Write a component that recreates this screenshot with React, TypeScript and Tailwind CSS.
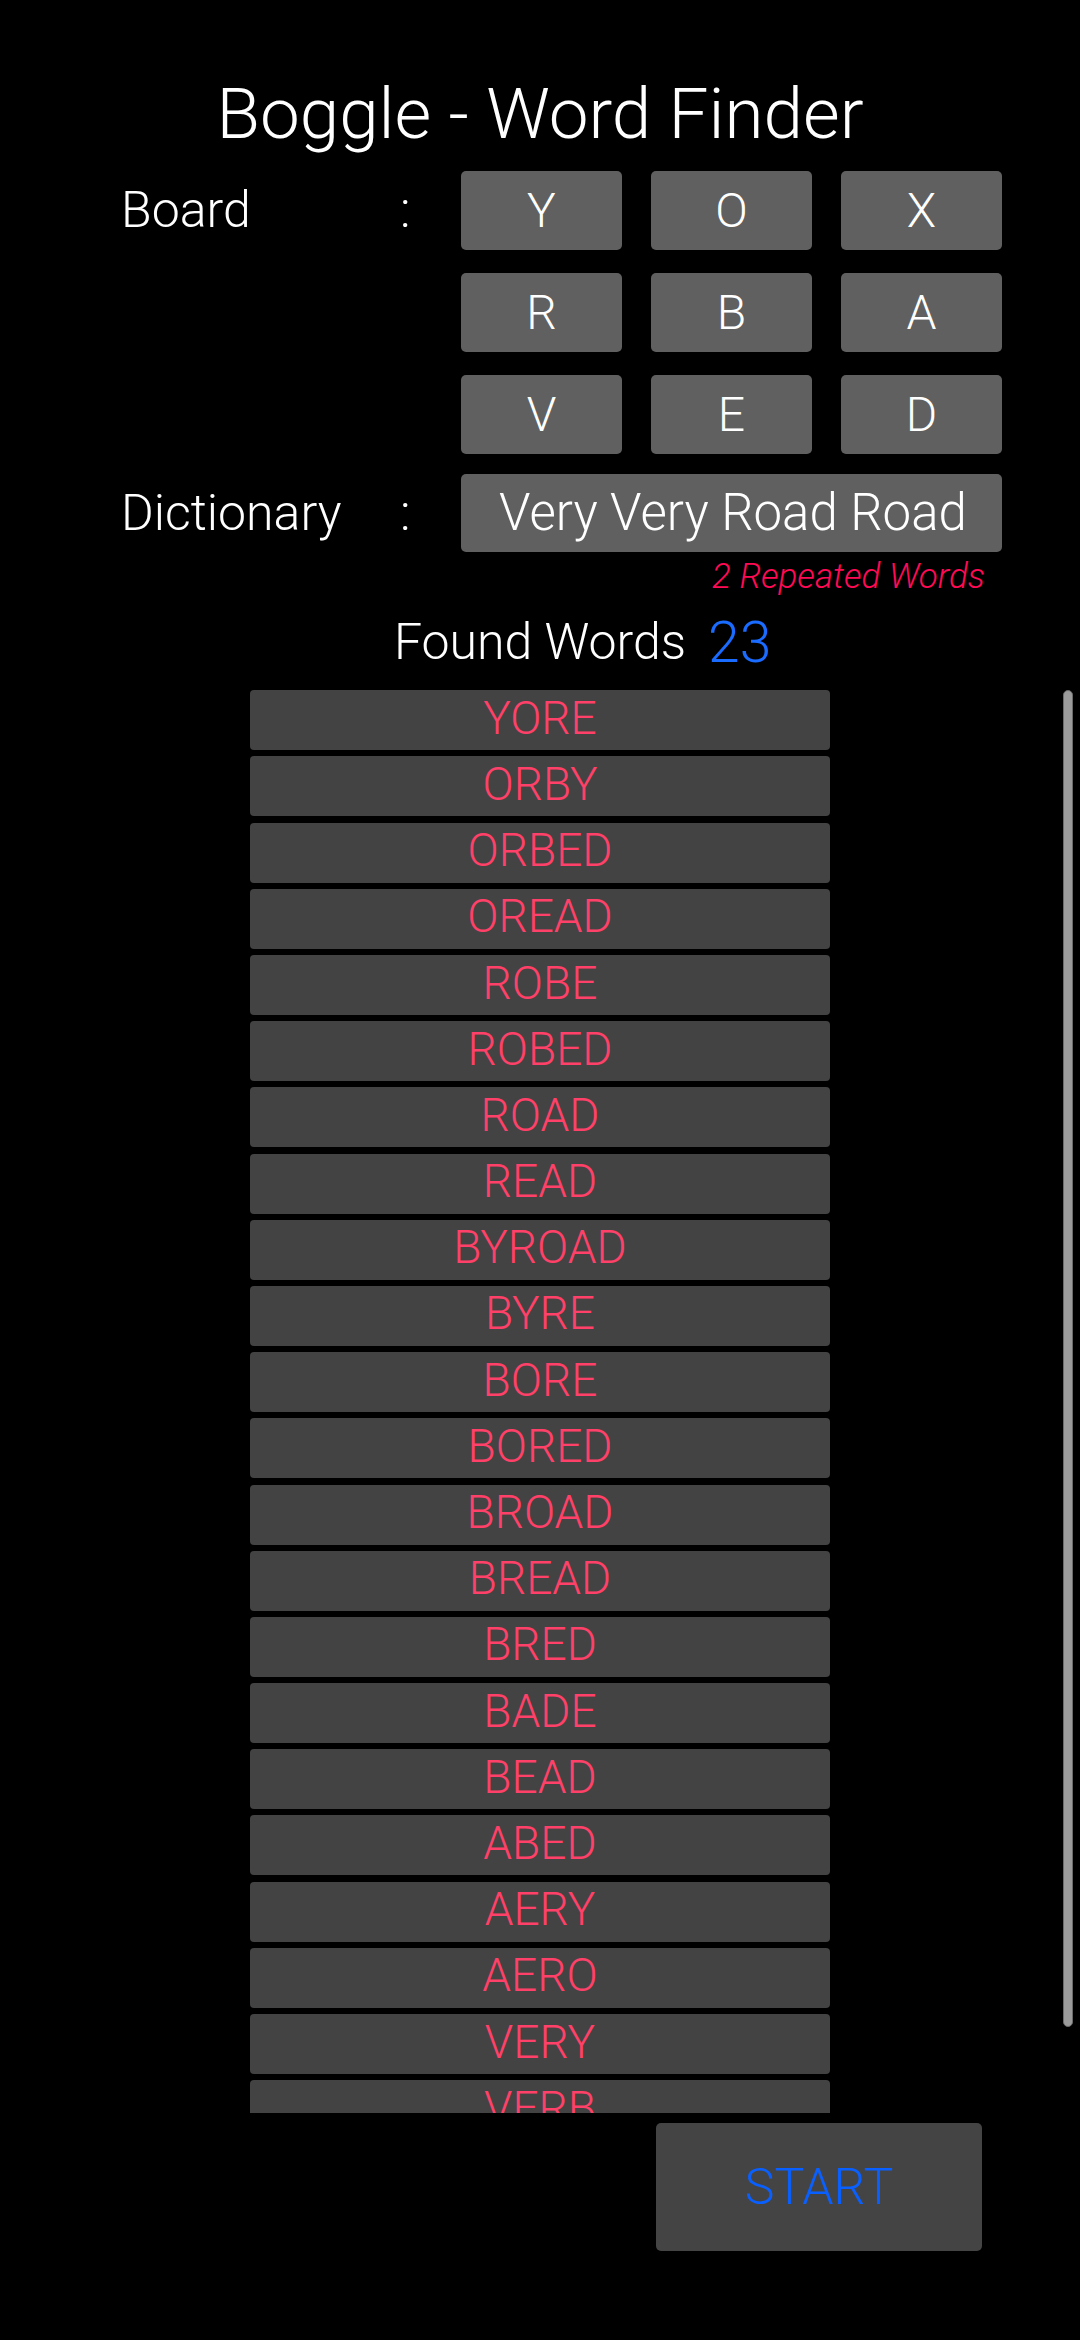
const board = ["Y", "O", "X", "R", "B", "A", "V", "E", "D"]

const words = [
  "YORE",
  "ORBY",
  "ORBED",
  "OREAD",
  "ROBE",
  "ROBED",
  "ROAD",
  "READ",
  "BYROAD",
  "BYRE",
  "BORE",
  "BORED",
  "BROAD",
  "BREAD",
  "BRED",
  "BADE",
  "BEAD",
  "ABED",
  "AERY",
  "AERO",
  "VERY",
  "VERB",
  "DEBAR",
]

const font = { fontFamily: "Roboto, 'Liberation Sans', sans-serif" }

export default function App() {
  return (
    <div
      className="relative w-[1080px] h-[2340px] bg-black text-white font-light overflow-hidden"
      style={font}
    >
      <h1 className="pt-[78px] text-center text-[71px] leading-none font-light">
        Boggle - Word Finder
      </h1>

      {/* board */}
      <div className="flex mt-[22px] pl-[121px]">
        <div className="flex w-[340px] h-[79px] items-center text-[50px]">
          <span className="w-[279px]">Board</span>
          <span>:</span>
        </div>
        <div className="grid grid-cols-[161px_161px_161px] gap-x-[29px] gap-y-[23px]">
          {board.map((letter, i) => (
            <div
              key={i}
              className="h-[79px] flex items-center justify-center rounded-[5px] bg-[#606060] text-[48px]"
            >
              {letter}
            </div>
          ))}
        </div>
      </div>

      {/* dictionary */}
      <div className="flex mt-[20px] pl-[121px]">
        <div className="flex w-[340px] h-[78px] items-center text-[50px]">
          <span className="w-[279px]">Dictionary</span>
          <span>:</span>
        </div>
        <div className="w-[541px] h-[78px] flex items-center pl-[38px] rounded-[5px] bg-[#606060] text-[51px] whitespace-nowrap">
          Very Very Road Road
        </div>
      </div>
      <div className="mt-[3px] pr-[95px] text-right text-[35px] italic text-[#ff0a55] leading-tight">
        2 Repeated Words
      </div>

      {/* found words */}
      <div className="flex justify-center mt-[12px]">
        <div className="relative text-[50px] leading-tight">
          Found Words
          <span className="absolute left-full ml-[22px] bottom-[2px] text-[57px] leading-none text-[#1a6bff]">
            23
          </span>
        </div>
      </div>

      {/* list */}
      <div className="relative mt-[17px] h-[1423px] overflow-hidden">
        <div className="flex flex-col items-center gap-[6.2px]">
          {words.map((word) => (
            <div
              key={word}
              className="w-[580px] h-[60px] shrink-0 flex items-center justify-center pb-[4px] rounded-[4px] bg-[#434343] text-[46px] text-[#ff4068]"
            >
              {word}
            </div>
          ))}
        </div>
        <div className="absolute right-[7px] top-0 w-[10px] h-[1337px] rounded-full bg-[#9b9b9b] border border-[#6a6a6a]" />
      </div>

      <div className="flex justify-end pr-[98px] mt-[10px]">
        <button className="w-[326px] h-[128px] rounded-[5px] bg-[#444444] text-[50px] font-light text-[#0a60ff]">
          START
        </button>
      </div>
    </div>
  )
}
